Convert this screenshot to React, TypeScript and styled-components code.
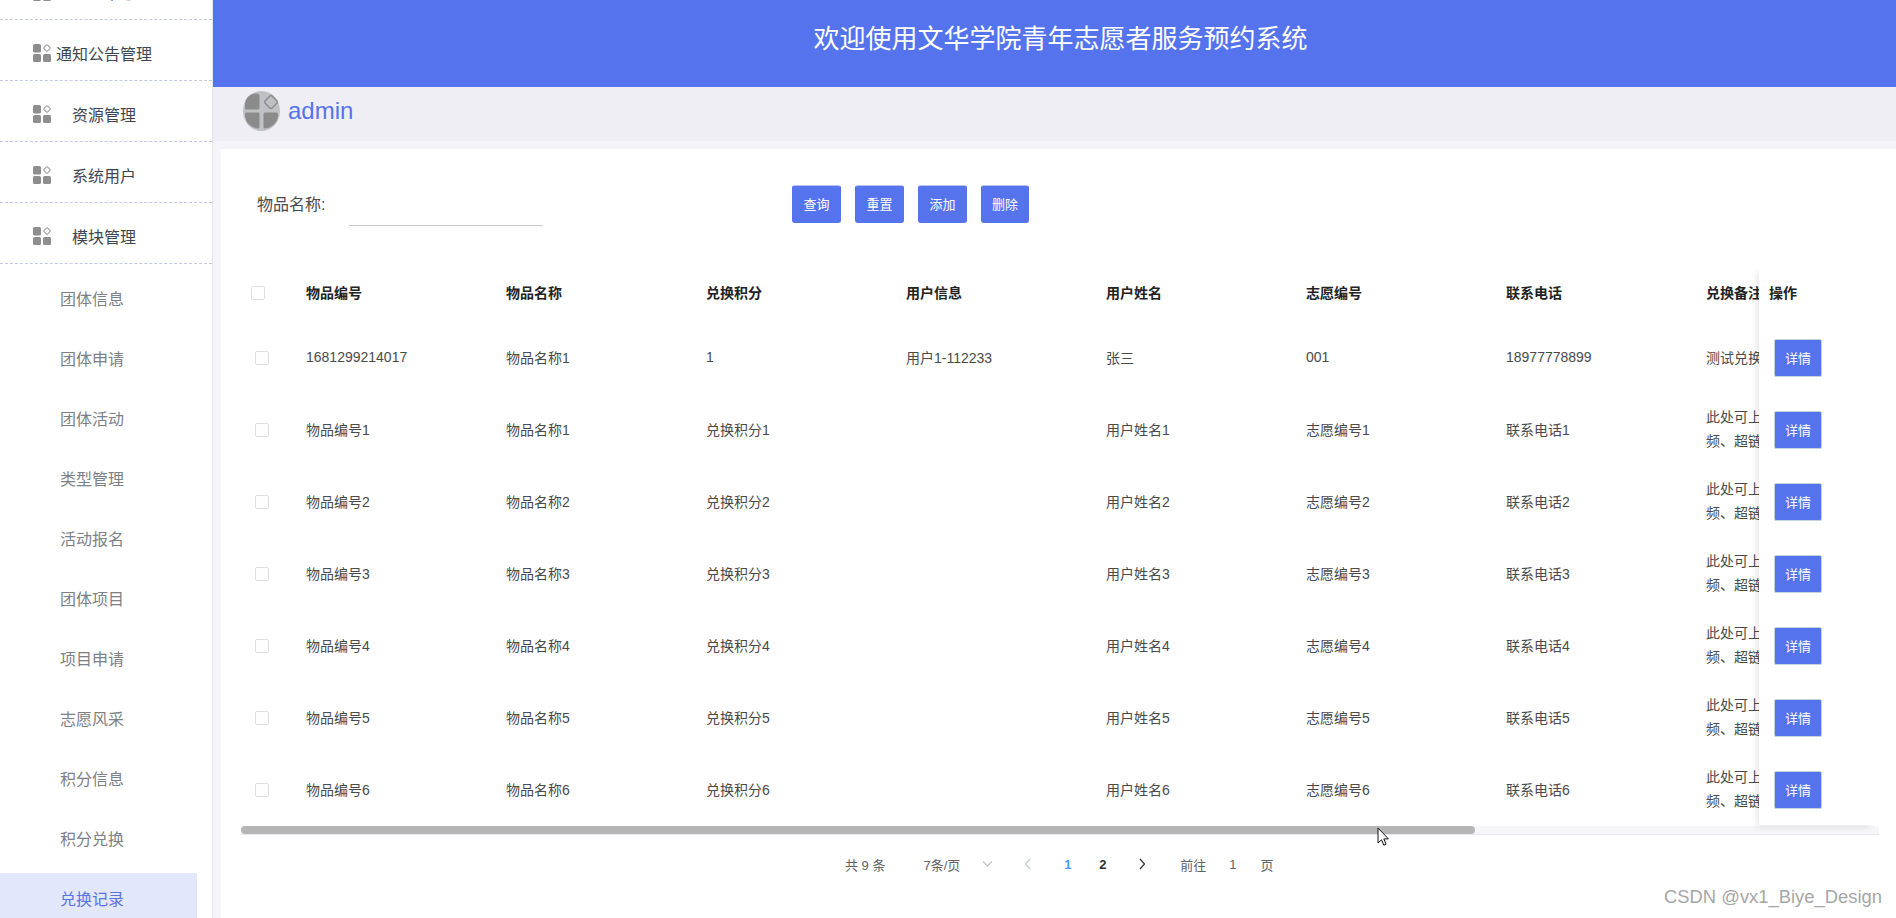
import React from "react";
import styled, { createGlobalStyle } from "styled-components";

const BLUE = "#5673ee";
const FONT = `"Liberation Sans", "Noto Sans CJK SC", sans-serif`;

const Global = createGlobalStyle`
  html, body { margin: 0; padding: 0; background: #fff; overflow: hidden; }
  * { box-sizing: border-box; }
  body { font-family: ${FONT}; }
`;

const Page = styled.div`
  position: relative;
  display: flex;
  width: 1896px;
  height: 918px;
  overflow: hidden;
  background: #f5f5f9;
`;

const Sidebar = styled.aside`
  flex: 0 0 213px;
  height: 918px;
  overflow: hidden;
  background: #fff;
  border-right: 1px solid #e6e6ea;
`;

const MenuList = styled.div`
  margin-top: -41px;
`;

const MenuRow = styled.div`
  display: flex;
  align-items: center;
  height: 61px;
  padding: 6px 0 0 33px;
  border-bottom: 1px dashed #c3c9e4;
  color: #3f4650;
`;

const MenuLabel = styled.span<{ $tight?: boolean }>`
  margin-left: ${(p) => (p.$tight ? "5px" : "21px")};
  padding-bottom: 1px;
  font-size: 16px;
  white-space: nowrap;
`;

const SubList = styled.div`
  display: flex;
  flex-direction: column;
  gap: 8px;
  padding-top: 9px;
`;

const SubItem = styled.div<{ $active?: boolean }>`
  display: flex;
  align-items: center;
  flex: 0 0 52px;
  width: 197px;
  padding: 0 0 3px 60px;
  font-size: 16px;
  color: ${(p) => (p.$active ? "#5b73e0" : "#7d8187")};
  background: ${(p) => (p.$active ? "#e3e7fb" : "transparent")};
`;

const Main = styled.main`
  flex: 1;
  display: flex;
  flex-direction: column;
  min-width: 0;
`;

const Banner = styled.header`
  flex: 0 0 87px;
  display: flex;
  align-items: center;
  justify-content: center;
  padding: 0 0 14px 12px;
  background: ${BLUE};
  color: #fff;
  font-size: 26px;
`;

const UserBar = styled.div`
  flex: 0 0 54px;
  display: flex;
  align-items: center;
  padding: 0 0 6px 30px;
  background: #eeeef4;
`;

const UserName = styled.span`
  margin-left: 8px;
  font-size: 24px;
  color: ${BLUE};
`;

const Card = styled.section`
  flex: 1;
  margin: 8px 0 0 8px;
  background: #fff;
  padding-top: 36px;
`;

const Toolbar = styled.div`
  display: flex;
  align-items: center;
  height: 38px;
  padding-left: 36px;
`;

const FieldLabel = styled.span`
  width: 92px;
  padding-bottom: 2px;
  font-size: 16px;
  color: #4a4a4a;
`;

const FieldLine = styled.div`
  width: 194px;
  height: 42px;
  margin-top: 2px;
  border-bottom: 1px solid #c8c8cc;
`;

const Actions = styled.div`
  display: flex;
  gap: 14px;
  margin-left: 249px;
`;

const ActionButton = styled.button`
  width: 49px;
  height: 38px;
  padding: 0 0 2px;
  border: 1px solid ${BLUE};
  border-top-color: #b8c2f0;
  border-radius: 3px;
  background: ${BLUE};
  color: #fff;
  font-family: ${FONT};
  font-size: 13px;
  &:last-child { width: 48px; }
`;

const TableFrame = styled.div`
  position: relative;
  width: 1638px;
  margin: 41px 0 0 20px;
`;

const Clip = styled.div`
  height: 562px;
  overflow: hidden;
`;

const Row = styled.div<{ $head?: boolean }>`
  display: grid;
  grid-template-columns: 65px repeat(8, 200px);
  align-items: center;
  width: 1665px;
  height: ${(p) => (p.$head ? "58px" : "72px")};
  font-size: 14px;
  font-weight: ${(p) => (p.$head ? 700 : 400)};
  color: ${(p) => (p.$head ? "#222" : "#4a4a4a")};
`;

const Check = styled.span<{ $head?: boolean }>`
  display: block;
  width: 14px;
  height: 14px;
  margin-left: ${(p) => (p.$head ? "10px" : "14px")};
  border: 1px solid #dcdfe6;
  border-radius: 2px;
  background: #fff;
`;

const Cell = styled.div`
  padding-bottom: 2px;
  white-space: nowrap;
`;

const Note = styled.div`
  width: 130px;
  padding-bottom: 2px;
  line-height: 24px;
`;

const FixedColumn = styled.div`
  position: absolute;
  top: 0;
  left: 1518px;
  width: 120px;
  height: 561px;
  background: #fff;
  box-shadow: -5px 5px 7px -3px rgba(0, 0, 0, 0.1);
`;

const FixedHead = styled.div`
  display: flex;
  align-items: center;
  height: 58px;
  padding: 0 0 2px 10px;
  font-size: 14px;
  font-weight: 700;
  color: #222;
`;

const FixedRow = styled.div`
  display: flex;
  align-items: center;
  height: 72px;
  padding-left: 15px;
`;

const DetailButton = styled.button`
  width: 48px;
  height: 38px;
  padding: 0 0 2px;
  border: 1px solid #c4d4d6;
  border-radius: 2px;
  background: ${BLUE};
  color: #fff;
  font-family: ${FONT};
  font-size: 13px;
`;

const Track = styled.div`
  height: 9px;
  background: #f6f6f8;
  border-bottom: 1px solid #e8eaf2;
`;

const Thumb = styled.div`
  width: 1234px;
  height: 8px;
  border-radius: 4px;
  background: #b5b5b5;
`;

const Pager = styled.nav`
  display: flex;
  align-items: center;
  height: 20px;
  margin-top: 19px;
  padding-left: 624px;
  font-size: 13px;
  color: #606266;
`;

const PagerSize = styled.span`
  margin-left: 38px;
`;

const PagerCaret = styled.span`
  display: flex;
  margin-left: 22px;
`;

const PagerPages = styled.div`
  display: flex;
  margin-left: 13px;
`;

const PagerArrow = styled.span`
  display: flex;
  align-items: center;
  justify-content: center;
  width: 44px;
`;

const PagerNumber = styled.span<{ $current?: boolean }>`
  display: flex;
  align-items: center;
  justify-content: center;
  width: 35px;
  font-weight: 700;
  color: ${(p) => (p.$current ? "#409eff" : "#303133")};
`;

const PagerJump = styled.span<{ $gap: number }>`
  margin-left: ${(p) => p.$gap}px;
`;

const Pointer = styled.svg`
  position: absolute;
  left: 1377px;
  top: 827px;
`;

const Watermark = styled.div`
  position: absolute;
  right: 14px;
  bottom: 10px;
  font-size: 18.4px;
  color: #a6a6a6;
  text-shadow: 0 0 2px #fff;
  white-space: nowrap;
`;

const GridIcon = () => (
  <svg width="18" height="18" viewBox="0 0 18 18" aria-hidden="true">
    <rect x="0" y="0" width="8" height="8.5" rx="1.5" fill="#8e8e8e" />
    <rect x="0" y="10" width="8" height="8" rx="1.5" fill="#8e8e8e" />
    <rect x="10" y="10" width="8" height="8" rx="1.5" fill="#8e8e8e" />
    <rect x="11.4" y="1.4" width="5.2" height="5.2" rx="1" fill="none" stroke="#9a9a9a" strokeWidth="1" transform="rotate(45 14 4)" />
  </svg>
);

const Avatar = () => (
  <svg width="37" height="40" viewBox="0 0 37 40" aria-hidden="true">
    <ellipse cx="18.5" cy="20" rx="18.5" ry="20" fill="#bfc1c5" />
    <path d="M12 2.5h1.5a3 3 0 0 1 3 3V17a1.5 1.5 0 0 1-1.5 1.5H3.5a1.5 1.5 0 0 1-1.5-1.5v-4A10.5 10.5 0 0 1 12 2.5z" fill="#8b8b8b" />
    <path d="M3.5 21.5H15a1.5 1.5 0 0 1 1.5 1.5v13a1.5 1.5 0 0 1-1.5 1.5A14 14 0 0 1 2 25v-2a1.5 1.5 0 0 1 1.5-1.5z" fill="#8b8b8b" />
    <path d="M20.5 23a1.5 1.5 0 0 1 1.5-1.5h11.5A1.5 1.5 0 0 1 35 23v2a14 14 0 0 1-13 12.5 1.5 1.5 0 0 1-1.5-1.5z" fill="#8b8b8b" />
    <rect x="23" y="6" width="10" height="10" rx="1.5" fill="none" stroke="#8b8b8b" strokeWidth="1.4" transform="rotate(45 28 11)" />
  </svg>
);

const Chevron = ({ dir, color }: { dir: "left" | "right" | "down"; color: string }) => {
  const d = dir === "left" ? "M7 1 2.5 6 7 11" : dir === "right" ? "M3 1l4.5 5L3 11" : "M1 3.5l4.5 4.5L10 3.5";
  return (
    <svg width="11" height="12" viewBox="0 0 11 12" fill="none" stroke={color} strokeWidth="1.2" aria-hidden="true">
      <path d={d} />
    </svg>
  );
};

const menus = ["个人中心", "通知公告管理", "资源管理", "系统用户", "模块管理"];
const subs = ["团体信息", "团体申请", "团体活动", "类型管理", "活动报名", "团体项目", "项目申请", "志愿风采", "积分信息", "积分兑换", "兑换记录"];
const heads = ["物品编号", "物品名称", "兑换积分", "用户信息", "用户姓名", "志愿编号", "联系电话", "兑换备注"];

const rows = [
  ["1681299214017", "物品名称1", "1", "用户1-112233", "张三", "001", "18977778899", "测试兑换"],
  ...[1, 2, 3, 4, 5, 6].map((n) => [
    `物品编号${n}`,
    `物品名称${n}`,
    `兑换积分${n}`,
    "",
    `用户姓名${n}`,
    `志愿编号${n}`,
    `联系电话${n}`,
    "此处可上传图片、视频、超链接",
  ]),
];

export default function App() {
  return (
    <Page>
      <Global />
      <Sidebar>
        <MenuList>
          {menus.map((m) => (
            <MenuRow key={m}>
              <GridIcon />
              <MenuLabel $tight={m.length > 4}>{m}</MenuLabel>
            </MenuRow>
          ))}
        </MenuList>
        <SubList>
          {subs.map((s) => (
            <SubItem key={s} $active={s === "兑换记录"}>{s}</SubItem>
          ))}
        </SubList>
      </Sidebar>
      <Main>
        <Banner>欢迎使用文华学院青年志愿者服务预约系统</Banner>
        <UserBar>
          <Avatar />
          <UserName>admin</UserName>
        </UserBar>
        <Card>
          <Toolbar>
            <FieldLabel>物品名称:</FieldLabel>
            <FieldLine />
            <Actions>
              {["查询", "重置", "添加", "删除"].map((b) => (
                <ActionButton key={b}>{b}</ActionButton>
              ))}
            </Actions>
          </Toolbar>
          <TableFrame>
            <Clip>
              <Row $head>
                <Check $head />
                {heads.map((h) => (
                  <Cell key={h}>{h}</Cell>
                ))}
              </Row>
              {rows.map((r, i) => (
                <Row key={i}>
                  <Check />
                  {r.map((c, j) =>
                    c.length > 10 && j === 7 ? <Note key={j}>{c}</Note> : <Cell key={j}>{c}</Cell>
                  )}
                </Row>
              ))}
            </Clip>
            <FixedColumn>
              <FixedHead>操作</FixedHead>
              {rows.map((_, i) => (
                <FixedRow key={i}>
                  <DetailButton>详情</DetailButton>
                </FixedRow>
              ))}
            </FixedColumn>
            <Track>
              <Thumb />
            </Track>
          </TableFrame>
          <Pager>
            <span>共 9 条</span>
            <PagerSize>7条/页</PagerSize>
            <PagerCaret>
              <Chevron dir="down" color="#c0c4cc" />
            </PagerCaret>
            <PagerPages>
              <PagerArrow><Chevron dir="left" color="#c0c4cc" /></PagerArrow>
              <PagerNumber $current>1</PagerNumber>
              <PagerNumber>2</PagerNumber>
              <PagerArrow><Chevron dir="right" color="#303133" /></PagerArrow>
            </PagerPages>
            <PagerJump $gap={16}>前往</PagerJump>
            <PagerJump $gap={23}>1</PagerJump>
            <PagerJump $gap={24}>页</PagerJump>
          </Pager>
        </Card>
      </Main>
      <Pointer width="13" height="20" viewBox="0 0 13 20" aria-hidden="true">
        <path d="M1 1v15l3.5-3.2 2.3 5.4 2.3-1-2.3-5.3h4.6z" fill="#fff" stroke="#111" strokeWidth="1" />
      </Pointer>
      <Watermark>CSDN @vx1_Biye_Design</Watermark>
    </Page>
  );
}
